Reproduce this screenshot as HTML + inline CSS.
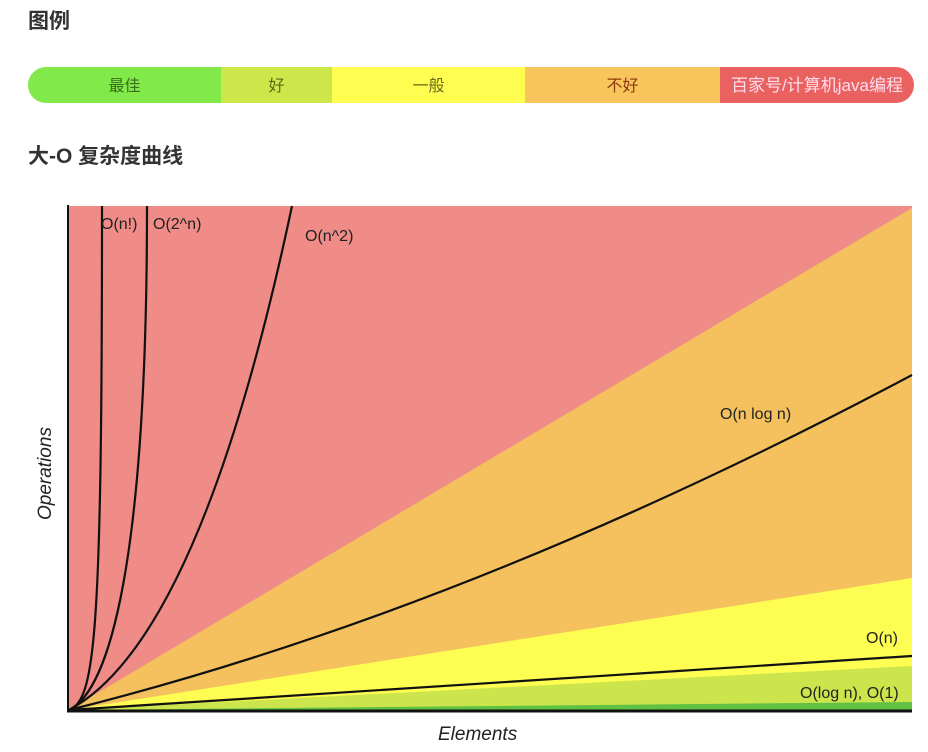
<!DOCTYPE html>
<html><head><meta charset="utf-8"><style>
body{margin:0;background:#fff;width:928px;height:752px;overflow:hidden;font-family:"Liberation Sans","Noto Sans CJK SC",sans-serif;position:relative}
h2{position:absolute;left:28px;margin:0;font-size:21px;font-weight:bold;color:#333}
.bar{position:absolute;left:28px;top:67px;width:886px;height:36px;border-radius:18px;overflow:hidden;display:flex;font-size:16px}
.bar div{display:flex;align-items:center;justify-content:center;padding-bottom:3px;box-sizing:border-box}
</style></head><body>
<h2 style="top:5px">图例</h2>
<div class="bar">
<div style="width:193px;background:#82e94a;color:#3a6e1c">最佳</div>
<div style="width:111px;background:#cde74a;color:#5a6a1a">好</div>
<div style="width:193px;background:#fffe50;color:#6a6a20">一般</div>
<div style="width:195px;background:#f8c55c;color:#8a3a10">不好</div>
<div style="width:194px;background:#e9625f;color:#fde;font-size:17px">百家号/计算机java编程</div>
</div>
<h2 style="top:140px">大-O 复杂度曲线</h2>
<svg style="position:absolute;left:0;top:0" width="928" height="752">
<rect x="67" y="206" width="845" height="505" fill="#ef8c88"/>
<polygon points="69,710 912,208 912,710" fill="#f5c15e"/>
<polygon points="69,710 912,578 912,710" fill="#fdfd52"/>
<polygon points="69,710 912,666 912,710" fill="#cde54c"/>
<polygon points="69,710 912,702 912,710" fill="#5fc243"/>
<g fill="none" stroke="#111" stroke-width="2.2">
<path d="M69,710 C95,700 102,640 102,206"/>
<path d="M69,710 C110,690 147,560 147,206"/>
<path d="M69,710 Q200,640 292,206"/>
<path d="M69,710 Q470,610 912,375"/>
<path d="M69,710 L912,656"/>
</g>
<line x1="68" y1="205" x2="68" y2="712" stroke="#111" stroke-width="2"/>
<line x1="67" y1="711" x2="912" y2="711" stroke="#111" stroke-width="3"/>
<g font-family="Liberation Sans,sans-serif" font-size="16" fill="#222">
<text x="101" y="229">O(n!)</text>
<text x="153" y="229">O(2^n)</text>
<text x="305" y="241">O(n^2)</text>
<text x="720" y="419">O(n log n)</text>
<text x="866" y="643">O(n)</text>
<text x="800" y="698">O(log n), O(1)</text>
<text x="438" y="740" font-size="19" font-style="italic">Elements</text>
<text transform="translate(51,520) rotate(-90)" font-size="19" font-style="italic">Operations</text>
</g>
</svg>
</body></html>
